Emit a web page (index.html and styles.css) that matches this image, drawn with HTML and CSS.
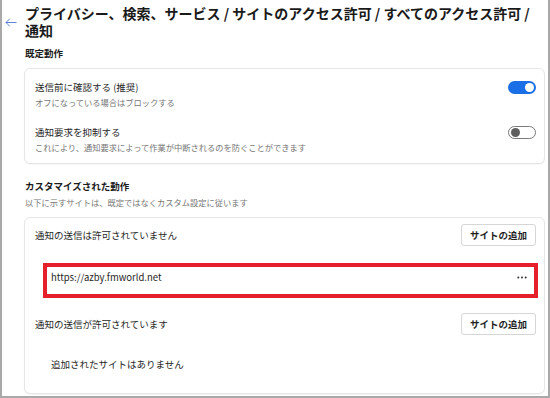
FILE: index.html
```html
<!DOCTYPE html>
<html lang="ja">
<head>
<meta charset="utf-8">
<link rel="stylesheet" href="styles.css">
</head>
<body>
<div class="frame">
  <header class="head">
    <svg class="back" width="12" height="9" viewBox="0 0 12 9"><path d="M11.5 4.5H1M4.8 0.7L1 4.5L4.8 8.3" fill="none" stroke="#5b82d6" stroke-width="1"/></svg>
    <h1 class="title">プライバシー、検索、サービス / サイトのアクセス許可 / すべてのアクセス許可 / <span class="nw">通知</span></h1>
  </header>

  <h2 class="sec">既定動作</h2>
  <div class="card card-default">
    <div class="row">
      <div class="txt">
        <div class="t">送信前に確認する (推奨)</div>
        <div class="s">オフになっている場合はブロックする</div>
      </div>
      <span class="tog on"><span class="knob"></span></span>
    </div>
    <div class="row">
      <div class="txt">
        <div class="t">通知要求を抑制する</div>
        <div class="s">これにより、通知要求によって作業が中断されるのを防ぐことができます</div>
      </div>
      <span class="tog off"><span class="knob"></span></span>
    </div>
  </div>

  <h2 class="sec sec2">カスタマイズされた動作</h2>
  <div class="s sub2">以下に示すサイトは、既定ではなくカスタム設定に従います</div>
  <div class="card card-custom">
    <div class="grp">
      <div class="t">通知の送信は許可されていません</div>
      <button class="btn">サイトの追加</button>
    </div>
    <div class="site">
      <span class="url">https://azby.fmworld.net</span>
      <svg class="more" width="10" height="3" viewBox="0 0 10 3"><circle cx="1.3" cy="1.5" r="1" fill="#333"/><circle cx="5" cy="1.5" r="1" fill="#333"/><circle cx="8.7" cy="1.5" r="1" fill="#333"/></svg>
    </div>
    <div class="grp grp2">
      <div class="t">通知の送信が許可されています</div>
      <button class="btn">サイトの追加</button>
    </div>
    <div class="empty">追加されたサイトはありません</div>
  </div>
</div>
</body>
</html>
```

FILE: styles.css
```css
* { box-sizing: border-box; }
html, body { margin: 0; padding: 0; background: #fff; }
body {
  font-family: "Noto Sans CJK JP", "Noto Sans", sans-serif;
  color: #1b1b1b;
  width: 550px;
  height: 398px;
  overflow: hidden;
}
.frame {
  width: 550px;
  height: 398px;
  border-left: 2px solid #a9a9a9;
  border-right: 2px solid #a9a9a9;
  border-bottom: 2px solid #a9a9a9;
  padding: 5px 3px 0 22px;
  display: flex;
  flex-direction: column;
}
.head {
  display: flex;
  align-items: center;
  margin-left: -19px;
}
.back { flex: none; margin-right: 8px; margin-top: 0; }
.title {
  margin: 0;
  font-size: 14px;
  line-height: 17px;
  font-weight: 700;
  max-width: 512px;
  color: #1a1a1a;
}
.nw { white-space: nowrap; }
.sec {
  margin: 7px 0 0 1px;
  font-size: 9.5px;
  line-height: 14px;
  font-weight: 700;
}
.sec2 { margin-top: 15px; }
.sub2 { margin: 3px 0 0 1px; }
.card {
  border: 1px solid #e6e6e6;
  border-radius: 6px;
  background: #fff;
  box-shadow: 0 1px 1px rgba(0,0,0,0.04);
  width: 521px;
}
.card-default {
  margin-top: 8px;
  height: 96px;
  padding: 11px 8px 0 10px;
  display: flex;
  flex-direction: column;
  gap: 17px;
}
.row {
  display: flex;
  justify-content: space-between;
  align-items: flex-start;
}
.txt { display: flex; flex-direction: column; gap: 2px; }
.t { font-size: 9.5px; line-height: 14px; color: #1f1f1f; }
.s { font-size: 8.25px; line-height: 12px; color: #767676; }
.tog {
  width: 28px;
  height: 13px;
  border-radius: 7px;
  margin-top: 1px;
  position: relative;
  display: flex;
  align-items: center;
}
.tog.on { background: #1b6fe6; justify-content: flex-end; padding-right: 2px; }
.tog.off { border: 1px solid #7a7a7a; background: #fff; padding-left: 2px; }
.knob { width: 9px; height: 9px; border-radius: 50%; }
.on .knob { background: #fff; }
.off .knob { background: #5f5f5f; }

.card-custom {
  margin-top: 9px;
  height: 177px;
  padding: 6px 8px 0 10px;
  display: flex;
  flex-direction: column;
}
.grp {
  display: flex;
  justify-content: space-between;
  align-items: center;
  height: 22px;
}
.grp2 { margin-top: 15px; }
.btn {
  font-family: inherit;
  font-size: 9.5px;
  font-weight: 700;
  color: #1f1f1f;
  background: #fff;
  border: 1px solid #d6d6d6;
  border-radius: 3px;
  width: 75px;
  height: 22px;
  padding: 0;
  line-height: 20px;
}
.site {
  margin: 17px -2px 0 8px;
  height: 35px;
  border: 4px solid #e5202a;
  padding: 4px 7px 0 4px;
  display: flex;
  justify-content: space-between;
  align-items: flex-start;
}
.url { font-size: 9.5px; line-height: 12px; color: #1f1f1f; }
.more { margin-top: 5px; }
.empty {
  margin: 22px 0 0 16px;
  font-size: 9.5px;
  line-height: 14px;
  color: #1f1f1f;
}
```
